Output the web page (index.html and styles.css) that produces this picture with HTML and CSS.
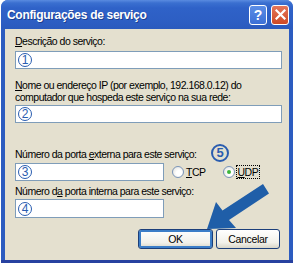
FILE: index.html
```html
<!DOCTYPE html>
<html>
<head>
<meta charset="utf-8">
<link rel="stylesheet" href="styles.css">
</head>
<body>
<div class="win">
  <div class="titlebar">
    <span class="title">Configurações de serviço</span>
    <div class="tb-btns">
      <span class="tb-btn help">?</span>
      <span class="tb-btn close"><svg width="11" height="11" viewBox="0 0 11 11"><path d="M1.5 1.5 L9.5 9.5 M9.5 1.5 L1.5 9.5" stroke="#fff" stroke-width="2.2" stroke-linecap="square"/></svg></span>
    </div>
  </div>
  <div class="body">
    <div class="lbl"><u>D</u>escrição do serviço:</div>
    <div class="field wide f1"><span class="num">1</span></div>
    <div class="lbl l2"><u>N</u>ome ou endereço IP (por exemplo, 192.168.0.12) do<br>computador que hospeda este serviço na sua rede:</div>
    <div class="field wide f2"><span class="num">2</span></div>
    <div class="lbl l3">Número da porta <u>e</u>xterna para este serviço:</div>
    <div class="row">
      <div class="field narrow"><span class="num">3</span></div>
      <span class="radio"><span class="dot"></span><span class="rtext"><u>T</u>CP</span></span>
      <span class="radio sel"><span class="dot"><span class="in"></span></span><span class="rtext focus"><u>U</u>DP</span></span>
      <span class="num big">5</span>
    </div>
    <div class="lbl l4">Número d<u>a</u> porta interna para este serviço:</div>
    <div class="field narrow f4"><span class="num">4</span></div>
    <div class="buttons">
      <span class="btn ok">OK</span>
      <span class="btn cancel">Cancelar</span>
    </div>
  </div>
  <svg class="arrow" width="297" height="265" viewBox="0 0 297 265">
    <polygon points="207,229 216,202 222.5,210.5 263,184 269,193.5 229,220 236,228" fill="#1F5EA8"/>
  </svg>
</div>
</body>
</html>
```
FILE: styles.css
```css
html, body { margin: 0; padding: 0; background: #fff; }
body { width: 297px; height: 265px; overflow: hidden; position: relative; }
.win {
  position: relative;
  margin-left: 1px;
  width: 284px;
  height: 260px;
  padding: 0 4px 3px 4px;
  background: #2C5CC0;
  border-radius: 7px 7px 0 0;
  box-shadow: inset 0 -3px 0 #2741A0;
  display: flex;
  flex-direction: column;
}
.titlebar {
  height: 29px;
  margin: 0 -4px;
  padding: 0 4px 0 6px;
  border-radius: 7px 7px 0 0;
  background: linear-gradient(to bottom, #5A8BE0 0, #3A6FD0 3px, #2F62C8 8px, #2D5EC3 22px, #2B5ABD 29px);
  display: flex;
  align-items: center;
  justify-content: space-between;
}
.title {
  color: #fff;
  font-family: "Liberation Sans", Arial, sans-serif;
  font-weight: bold;
  font-size: 12px;
  letter-spacing: -0.3px;
  text-shadow: 1px 1px 0 #1E3F90;
  margin-top: 1px;
}
.tb-btns { display: flex; gap: 4px; }
.tb-btn {
  width: 16px; height: 18px;
  border: 1px solid #fff;
  border-radius: 3px;
  display: flex; align-items: center; justify-content: center;
  color: #fff;
  font-family: "Liberation Sans", Arial, sans-serif;
  font-weight: bold;
  font-size: 14px;
}
.help { background: linear-gradient(to bottom, #5C8EE6, #3B6FD6); }
.close { background: linear-gradient(to bottom, #E5765A, #CF4A25); }
.body {
  flex: 1;
  background: #E4E0CF;
  padding: 6px 7px 0 10px;
  font-family: "Liberation Sans", Arial, sans-serif;
  font-size: 10.5px;
  letter-spacing: -0.5px;
  color: #000;
  display: flex;
  flex-direction: column;
}
.lbl { line-height: 12px; }
.field {
  background: #fff;
  border: 1px solid #7F9DB9;
  box-sizing: border-box;
  height: 18px;
  display: flex;
  align-items: center;
  padding-left: 2px;
}
.wide { width: 267px; }
.narrow { width: 149px; }
.f1 { margin-top: 4px; }
.l2 { margin-top: 10px; }
.f2 { margin-top: 2px; }
.l3 { margin-top: 25px; }
.row { margin-top: 3px; display: flex; align-items: center; position: relative; }
.l4 { margin-top: 4px; }
.f4 { margin-top: 2px; height: 19px; }
.num {
  width: 12px; height: 12px;
  border: 1.2px solid #2A5DB0;
  border-radius: 50%;
  color: #2A5DB0;
  font-size: 12px;
  letter-spacing: 0;
  line-height: 12px;
  text-align: center;
  display: inline-block;
}
.num.big {
  position: absolute;
  left: 196px; top: -19px;
  width: 14px; height: 14px;
  border-width: 2px;
  font-weight: bold;
  font-size: 13px;
  line-height: 14px;
}
.radio { display: flex; align-items: center; }
.radio:first-of-type { margin-left: 8px; }
.radio.sel { margin-left: 17px; }
.dot {
  width: 10px; height: 10px;
  border: 1px solid #7A94B8;
  border-radius: 50%;
  background: radial-gradient(circle at 60% 60%, #fff 30%, #DCDCD6 100%);
  display: flex; align-items: center; justify-content: center;
}
.in { width: 4px; height: 4px; border-radius: 50%; background: #3DB63D; }
.rtext { margin-left: 2px; }
.focus { outline: 1px dotted #000; outline-offset: 0; padding: 0 1px; }
.buttons {
  margin-top: 11px;
  display: flex;
  justify-content: flex-end;
  gap: 3px;
  padding-right: 2px;
}
.btn {
  height: 20px;
  box-sizing: border-box;
  border: 1px solid #1C3F7A;
  border-radius: 3px;
  background: linear-gradient(to bottom, #FFFFFF, #F2F1EA 70%, #D9D6C8);
  display: flex; align-items: center; justify-content: center;
  letter-spacing: -0.3px;
}
.ok { width: 75px; box-shadow: inset 0 0 0 2px #3C7EC8; }
.cancel { width: 64px; }
.arrow { position: absolute; left: -1px; top: 0; pointer-events: none; }
```
